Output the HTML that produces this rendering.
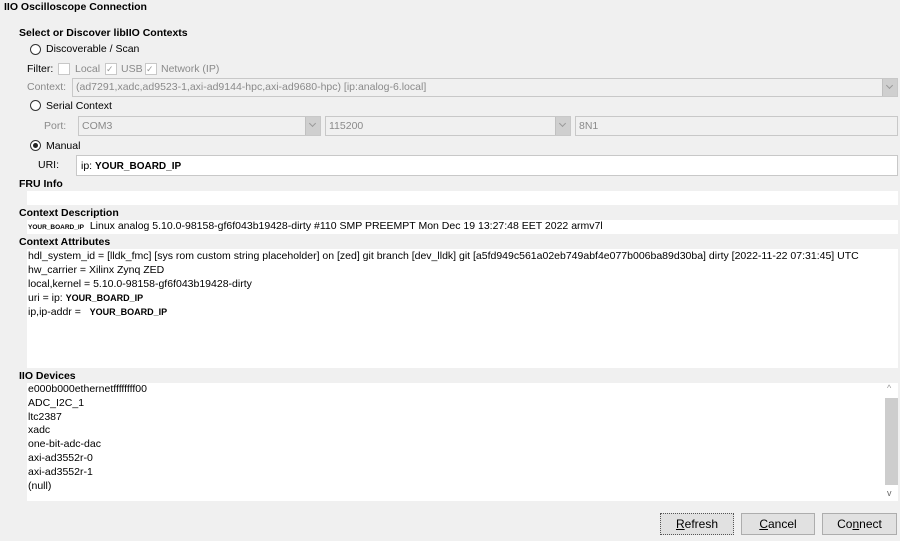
<!DOCTYPE html>
<html><head><meta charset="utf-8"><style>
body{margin:0;width:900px;height:541px;background:#f0f0f0;font-family:"Liberation Sans",sans-serif;font-size:10.5px;color:#000;position:relative;overflow:hidden}
.a{position:absolute;white-space:nowrap}
.b{font-weight:bold}
.g{color:#8a8a8a}
.box{position:absolute;border:1px solid #c8c8c8;background:#f0f0f0;box-sizing:border-box}
.arr{position:absolute;top:0;right:0;width:14px;height:100%;background:#cfcfcf;border-left:1px solid #c0c0c0}
.arr:after{content:"";position:absolute;left:4px;top:4px;width:4px;height:4px;border-right:1px solid #999;border-bottom:1px solid #999;transform:rotate(45deg)}
.r{position:absolute;width:11px;height:11px;border:1px solid #333;border-radius:50%;box-sizing:border-box;background:#fff}
.cb{position:absolute;width:12px;height:12px;border:1px solid #c8c8c8;box-sizing:border-box;background:#fff}
.w{position:absolute;background:#fff}
.btn{position:absolute;height:22px;top:513px;border:1px solid #adadad;background:#e1e1e1;box-sizing:border-box;text-align:center;line-height:20px;font-size:12px}
.sb{font-size:9px;font-weight:bold}
</style></head><body>
<div class="a b" style="left:4px;top:1px">IIO Oscilloscope Connection</div>
<div class="a b" style="left:19px;top:27px">Select or Discover libIIO Contexts</div>
<div class="r" style="left:30px;top:44px"></div><div class="a" style="left:46px;top:43px">Discoverable / Scan</div>
<div class="a" style="left:27px;top:63px">Filter:</div>
<div class="cb" style="left:58px;top:63px"></div><div class="a g" style="left:75px;top:63px">Local</div>
<div class="cb" style="left:105px;top:63px;color:#999;font-size:9px;line-height:10px">✓</div><div class="a g" style="left:121px;top:63px">USB</div>
<div class="cb" style="left:145px;top:63px;color:#999;font-size:9px;line-height:10px">✓</div><div class="a g" style="left:161px;top:63px">Network (IP)</div>
<div class="a g" style="left:27px;top:81px">Context:</div>
<div class="box" style="left:72px;top:78px;width:826px;height:19px"><div class="arr"></div><div class="a g" style="left:3px;top:2px">(ad7291,xadc,ad9523-1,axi-ad9144-hpc,axi-ad9680-hpc) [ip:analog-6.local]</div></div>
<div class="r" style="left:30px;top:100px"></div><div class="a" style="left:46px;top:100px">Serial Context</div>
<div class="a g" style="left:44px;top:120px">Port:</div>
<div class="box" style="left:78px;top:116px;width:243px;height:20px"><div class="arr"></div><div class="a g" style="left:3px;top:3px">COM3</div></div>
<div class="box" style="left:325px;top:116px;width:246px;height:20px"><div class="arr"></div><div class="a g" style="left:3px;top:3px">115200</div></div>
<div class="box" style="left:575px;top:116px;width:323px;height:20px"><div class="a g" style="left:3px;top:3px">8N1</div></div>
<div class="r" style="left:30px;top:140px"></div><div style="position:absolute;left:33px;top:143px;width:5px;height:5px;border-radius:50%;background:#222"></div><div class="a" style="left:46px;top:140px">Manual</div>
<div class="a" style="left:38px;top:159px">URI:</div>
<div class="box" style="left:76px;top:155px;width:822px;height:21px;background:#fff"><div class="a" style="left:4px;top:4px">ip: <span class="b" style="font-size:10px">YOUR_BOARD_IP</span></div></div>
<div class="a b" style="left:19px;top:178px">FRU Info</div>
<div class="w" style="left:27px;top:191px;width:871px;height:14px"></div>
<div class="a b" style="left:19px;top:207px">Context Description</div>
<div class="w" style="left:27px;top:220px;width:871px;height:14px"></div>
<div class="a" style="left:28px;top:220px"><span class="sb" style="font-size:6.5px">YOUR_BOARD_IP</span>&nbsp; Linux analog 5.10.0-98158-gf6f043b19428-dirty #110 SMP PREEMPT Mon Dec 19 13:27:48 EET 2022 armv7l</div>
<div class="a b" style="left:19px;top:236px">Context Attributes</div>
<div class="w" style="left:27px;top:249px;width:871px;height:119px"></div>
<div class="a" style="left:28px;top:249px;line-height:14px">hdl_system_id = [lldk_fmc] [sys rom custom string placeholder] on [zed] git branch [dev_lldk] git [a5fd949c561a02eb749abf4e077b006ba89d30ba] dirty [2022-11-22 07:31:45] UTC<br>hw_carrier = Xilinx Zynq ZED<br>local,kernel = 5.10.0-98158-gf6f043b19428-dirty<br>uri = ip: <span class="sb">YOUR_BOARD_IP</span><br>ip,ip-addr = &nbsp; <span class="sb">YOUR_BOARD_IP</span></div>
<div class="a b" style="left:19px;top:370px">IIO Devices</div>
<div class="w" style="left:27px;top:383px;width:871px;height:118px"></div>
<div class="a" style="left:28px;top:383px;line-height:13.8px">e000b000ethernetffffffff00<br>ADC_I2C_1<br>ltc2387<br>xadc<br>one-bit-adc-dac<br>axi-ad3552r-0<br>axi-ad3552r-1<br>(null)</div>
<div style="position:absolute;left:885px;top:398px;width:13px;height:87px;background:#cdcdcd"></div>
<div class="a" style="left:887px;top:383px;color:#999;font-size:9px">^</div>
<div class="a" style="left:887px;top:488px;color:#666;font-size:9px">v</div>
<div class="btn" style="left:660px;width:74px;border:1px dotted #555"><u>R</u>efresh</div>
<div class="btn" style="left:741px;width:74px"><u>C</u>ancel</div>
<div class="btn" style="left:822px;width:75px">Co<u>n</u>nect</div>
</body></html>
